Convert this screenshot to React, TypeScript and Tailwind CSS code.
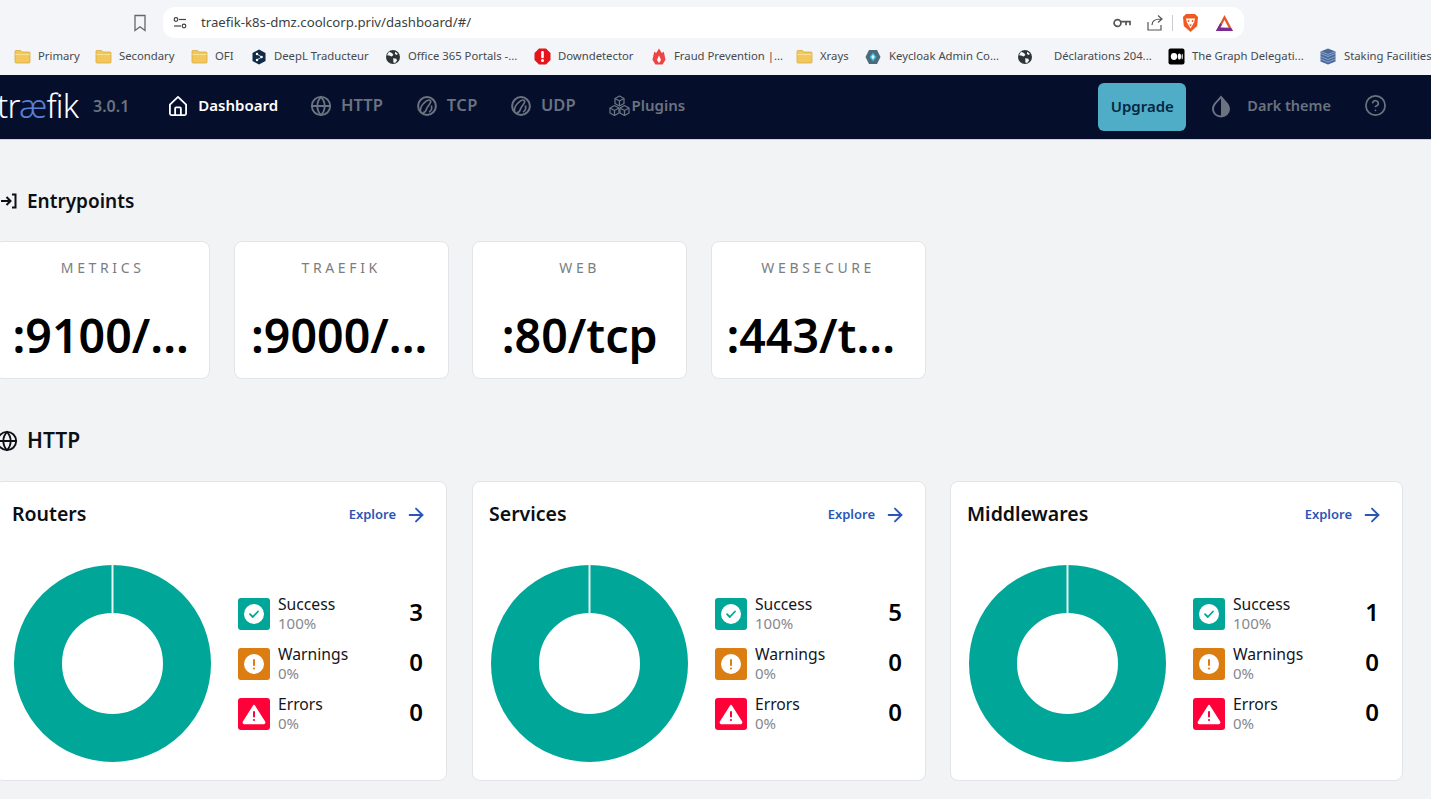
import { ArrowRight, Globe, CircleHelp } from "lucide-react";

const sans = "font-['Noto_Sans','Liberation_Sans',sans-serif]";

function Folder() {
  return (
    <svg width="17" height="15" viewBox="0 0 17 15" className="shrink-0">
      <path d="M1 2.500a1 1 0 0 1 1-1h4.500l1.500 1.500h7a1 1 0 0 1 1 1v9a1 1 0 0 1-1 1H2a1 1 0 0 1-1-1z" fill="#f2c75c" stroke="#d9a93f" strokeWidth="0.8" />
      <path d="M1.400 5h14.200v1H1.400z" fill="#fbe08f" />
    </svg>
  );
}
function EarthDark() {
  return (
    <svg width="16" height="16" viewBox="0 0 16 16" className="shrink-0">
      <circle cx="8" cy="8" r="7" fill="#2f3438" />
      <path d="M4 2.800 7 4 8.400 6 6.600 7.600 4.200 6.600 2 6.200zM8.200 9.200l3.200.6.6 2-2 2.200-1.600-.6zM10.400 2.800 13 5l-1.600 1-1.600-1.200z" fill="#f4f6f9" />
    </svg>
  );
}
function DeepL() {
  return (
    <svg width="15" height="16" viewBox="0 0 15 16" className="shrink-0">
      <path d="M7 0.500 13.500 4v8L7 15.500.5 12V4z" fill="#0f2b46" />
      <circle cx="5" cy="5" r="1.200" fill="#fff" />
      <circle cx="5" cy="11" r="1.200" fill="#fff" />
      <circle cx="9.600" cy="8" r="1.200" fill="#fff" />
      <path d="M5 5 9.600 8 5 11" stroke="#fff" strokeWidth="0.8" fill="none" />
    </svg>
  );
}
function Down() {
  return (
    <svg width="17" height="17" viewBox="0 0 17 17" className="shrink-0">
      <path d="M5 .5h7L16.500 5v7L12 16.500H5L.5 12V5z" fill="#e5141b" />
      <rect x="7.200" y="3" width="2.600" height="7.200" rx="1" fill="#fff" />
      <circle cx="8.500" cy="12.600" r="1.500" fill="#fff" />
    </svg>
  );
}
function Fraud() {
  return (
    <svg width="16" height="17" viewBox="-1 0 16 17" className="shrink-0">
      <path d="M7 .5 9.800 5l2-1.200 1.700 8L10.600 16.500H3.400L.5 11.800l1.700-8L4.200 5z" fill="#ef4444" />
      <path d="M7 7.500 9 12l-2 3-2-3z" fill="#fff" />
    </svg>
  );
}
function Keycloak() {
  return (
    <svg width="17" height="16" viewBox="0 0 17 16" className="shrink-0">
      <path d="M4 1h8l3.500 7L12 15H4L.5 8z" fill="#4d6a7a" />
      <path d="M8 3.500 11.500 8 8 12.500 4.500 8z" fill="#35b8dc" />
      <path d="M8 5.500 9.800 8 8 10.500 6.200 8z" fill="#d8f3fa" />
    </svg>
  );
}
function Medium() {
  return (
    <svg width="17" height="17" viewBox="0 0 17 17" className="shrink-0">
      <rect x="0.500" y="0.500" width="16" height="16" rx="2" fill="#000" />
      <ellipse cx="6" cy="8.500" rx="3.200" ry="3.400" fill="#fff" />
      <ellipse cx="11.400" cy="8.500" rx="1.600" ry="3.100" fill="#fff" />
      <ellipse cx="14.200" cy="8.500" rx="0.6" ry="2.800" fill="#fff" />
    </svg>
  );
}
function Staking() {
  return (
    <svg width="17" height="17" viewBox="0 0 17 17" className="shrink-0">
      <path d="M8 .5 15.500 3.500v10L8 16.500.5 13.500v-10z" fill="#4a6a9f" />
      <path d="M.5 5.500 8 8.500l7.500-3M.5 8.500l7.500 3 7.500-3M.5 11l7.500 3 7.500-3M.5 3.500l7.500 3 7.500-3" stroke="#b3c4de" strokeWidth="0.6" fill="none" />
    </svg>
  );
}

const bookmarks = [
  { icon: <Folder />, label: "Primary", cls: "w-[81px]" },
  { icon: <Folder />, label: "Secondary", cls: "w-[96px]" },
  { icon: <Folder />, label: "OFI", cls: "w-[61px]" },
  { icon: <DeepL />, label: "DeepL Traducteur", cls: "w-[133px]" },
  { icon: <EarthDark />, label: "Office 365 Portals -...", cls: "w-[149px]" },
  { icon: <Down />, label: "Downdetector", cls: "w-[117px]" },
  { icon: <Fraud />, label: "Fraud Prevention |...", cls: "w-[145px]" },
  { icon: <Folder />, label: "Xrays", cls: "w-[69px]" },
  { icon: <Keycloak />, label: "Keycloak Admin Co...", cls: "w-[152px]" },
  { icon: <EarthDark />, label: "", cls: "w-[37px]" },
  { icon: null, label: "Déclarations 204...", cls: "w-[114px]" },
  { icon: <Medium />, label: "The Graph Delegati...", cls: "w-[152px]" },
  { icon: <Staking />, label: "Staking Facilities", cls: "w-[111px]" },
];

function Tune() {
  return (
    <svg width="16" height="16" viewBox="0 0 16 16" fill="none" stroke="#444" strokeWidth="1.200">
      <circle cx="4" cy="4.500" r="1.800" />
      <path d="M7 4.500h7" />
      <circle cx="12" cy="11" r="1.800" />
      <path d="M2 11h7" />
    </svg>
  );
}

function Chrome() {
  return (
    <div className="bg-[#f3f5f8]">
      <div className="h-[38px] pt-[7px] flex items-center">
        <svg width="14" height="18" viewBox="0 0 14 18" fill="none" stroke="#666" strokeWidth="1.300" className="ml-[133px]">
          <path d="M2 1.500h10v15L7 12.800 2 16.500z" />
        </svg>
        <div className="ml-4 w-[1081px] h-[31px] bg-white rounded-xl flex items-center">
          <span className="ml-[9px]"><Tune /></span>
          <span className={`ml-[13px] text-[13.200px] text-[#3a3f44] ${sans}`}>traefik-k8s-dmz.coolcorp.priv/dashboard/#/</span>
          <div className="ml-auto flex items-center">
            <svg width="18" height="12" viewBox="0 0 18 12" fill="none" stroke="#555" strokeWidth="1.700">
              <circle cx="4.500" cy="6" r="3.400" />
              <path d="M8 4.700h9v3.600M13 4.700v3.600" />
            </svg>
            <svg width="18" height="18" viewBox="0 0 18 18" fill="none" stroke="#555" strokeWidth="1.200" className="ml-[15px]">
              <path d="M2 8v8h13v-5M6 11c0-4 3-6 9-6M12 1.500l4 3.500-4 3.500" />
            </svg>
            <div className="ml-[8px] w-px h-[16px] bg-[#c9ccd0]" />
            <svg width="17" height="20" viewBox="0 0 17 20" className="ml-[9px]">
              <path d="M4 1h9l3 3-.8 9L8.500 19 1.800 13 1 4z" fill="#f0591f" />
              <path d="M4 5.500h9l-1 4-3.500 6L5 9.500z" fill="#fff" />
              <circle cx="6.500" cy="8" r="0.900" fill="#f0591f" />
              <circle cx="10.500" cy="8" r="0.900" fill="#f0591f" />
              <path d="M7 11.500h3l-1.500 2z" fill="#f0591f" />
            </svg>
            <svg width="19" height="18" viewBox="0 0 19 18" className="ml-[16px] mr-[10px]">
              <path d="M9.500 1 18 17H1z" fill="#e05a2b" />
              <path d="M1 17 5.300 9 9.500 13 6 17z" fill="#7a2b8f" />
              <path d="M9.500 6 13.500 13.500H5.500z" fill="#fff" />
              <path d="M1 17h17l-2-3H3z" fill="#7a2b8f" />
            </svg>
          </div>
        </div>
      </div>
      <div className={`h-[37px] flex items-center pl-[14px] overflow-hidden whitespace-nowrap text-[11.300px] text-[#464a4e] ${sans}`}>
        {bookmarks.map((b, i) => (
          <div key={i} className={`${b.cls} shrink-0 flex items-center gap-[7px]`}>
            {b.icon}
            {b.label && <span>{b.label}</span>}
          </div>
        ))}
      </div>
    </div>
  );
}

function Wave() {
  return (
    <svg width="20" height="20" viewBox="0 0 20 20" fill="none" stroke="#6b7280" className="shrink-0">
      <circle cx="10" cy="10" r="8.900" strokeWidth="2" />
      <path d="M3.500 15.500C3 11 5 9 6.500 7.500S9.500 4 12 4c2 0 2 2 1 3.500S10 11 9.500 13s-1 3.500-3.500 3.500" strokeWidth="1.700" />
      <path d="M12 16c2.500-1 3-3.500 2.500-6.500" strokeWidth="1.700" />
    </svg>
  );
}

function Cubes() {
  return (
    <svg width="21" height="21" viewBox="0 0 21 21" fill="none" stroke="#6b7280" strokeWidth="1.300" strokeLinejoin="round" className="shrink-0">
      <path d="M10.500 1 15 3.500v5l-4.500 2.500L6 8.500v-5z" />
      <path d="M6 3.500 10.500 6 15 3.500M10.500 6v5" />
      <path d="M5.500 10.500 10 13v5l-4.500 2.500L1 18v-5z" />
      <path d="M1 13l4.500 2.500L10 13M5.500 15.500v5" />
      <path d="M15.500 10.500 20 13v5l-4.500 2.500L11 18v-5z" />
      <path d="M11 13l4.500 2.500L20 13M15.500 15.500v5" />
    </svg>
  );
}

function Nav() {
  return (
    <div className={`h-[65px] pb-[3px] bg-[#050f2c] flex items-center whitespace-nowrap font-semibold text-[15px] text-[#6b7280] ${sans} border-b border-[#c9d3e6]`}>
      <span className="ml-[-3px] w-[96px] text-[33px] font-light text-white tracking-tight leading-none">
        tr<span className="text-[#5a7fd6]">æ</span>fik
      </span>
      <span className="text-[16px]">3.0.1</span>
      <svg width="20" height="22" viewBox="0 0 21 22" fill="none" stroke="#fff" strokeWidth="1.900" strokeLinejoin="round" className="ml-[39px] shrink-0">
        <path d="M2 9.500 10.500 1.500 19 9.500V19a1.500 1.500 0 0 1-1.500 1.500h-14A1.500 1.500 0 0 1 2 19z" />
        <path d="M7.500 20.500V13.500a1 1 0 0 1 1-1h4a1 1 0 0 1 1 1v7" />
      </svg>
      <span className="ml-[10px] text-white">Dashboard</span>
      <Globe size={22} strokeWidth={2} className="ml-[32px] shrink-0" />
      <span className="ml-[9px] text-[16.500px]">HTTP</span>
      <span className="ml-[34px]"><Wave /></span>
      <span className="ml-[10px] text-[16.500px] tracking-[0.5px]">TCP</span>
      <span className="ml-[33px]"><Wave /></span>
      <span className="ml-[10px] text-[16.500px]">UDP</span>
      <span className="ml-[33px]"><Cubes /></span>
      <span className="ml-[2px]">Plugins</span>
      <div className="ml-auto flex items-center">
        <button className="mt-[3px] pb-[2px] w-[88px] h-[48px] rounded-md bg-[#4fadc7] text-[#06283f] font-semibold text-[15px]">Upgrade</button>
        <svg width="20" height="24" viewBox="0 0 20 24" className="ml-[25px]">
          <path d="M10 1.500C6 6.500 1 10 1 15a9 8.500 0 0 0 18 0C19 10 14 6.500 10 1.500z" fill="#6b7280" />
          <path d="M10 4.500C7 8 3 11 3 15c0 3.800 3.200 6.400 7 6.500z" fill="#050f2c" />
        </svg>
        <span className="ml-[16px] text-[14.500px]">Dark theme</span>
        <CircleHelp size={23} strokeWidth={1.800} className="ml-[33px] mr-[44px] shrink-0" />
      </div>
    </div>
  );
}

function EntryCard({ name, value, shift }: { name: string; value: string; shift: string }) {
  return (
    <div className="w-[215px] h-[138px] shrink-0 bg-white rounded-lg border border-[#e2e4e8] flex flex-col items-center pt-[17px]">
      <div className="text-[14px] tracking-[0.260em] text-[#7a7d82] leading-[18px]">{name}</div>
      <div className={`mt-[28px] text-[46.500px] font-semibold leading-[60px] text-black ${shift}`}>{value}</div>
    </div>
  );
}

function Check() {
  return (
    <svg width="22" height="22" viewBox="0 0 22 22">
      <circle cx="11" cy="11" r="10" fill="#fff" />
      <path d="M7 11.200 9.800 14 15 8.500" fill="none" stroke="#00a697" strokeWidth="1.800" strokeLinecap="round" strokeLinejoin="round" />
    </svg>
  );
}
function Warn() {
  return (
    <svg width="22" height="22" viewBox="0 0 22 22">
      <circle cx="11" cy="11" r="10" fill="#fff" />
      <rect x="10" y="6" width="2" height="7" rx="1" fill="#db7d11" />
      <circle cx="11" cy="15.500" r="1.100" fill="#db7d11" />
    </svg>
  );
}
function Err() {
  return (
    <svg width="24" height="22" viewBox="0 0 24 22">
      <path d="M12 2.500 22.500 19a1 1 0 0 1-.8 1.500H2.300A1 1 0 0 1 1.500 19z" fill="#fff" stroke="#fff" strokeWidth="1.500" strokeLinejoin="round" />
      <rect x="11" y="8" width="2" height="6.500" rx="1" fill="#ff0039" />
      <circle cx="12" cy="17" r="1.100" fill="#ff0039" />
    </svg>
  );
}

function Stat({ icon, bg, label, pct, n }: { icon: React.ReactNode; bg: string; label: string; pct: string; n: number }) {
  return (
    <div className="h-[32px] flex items-center">
      <div className={`w-[32px] h-[32px] rounded-[3px] flex items-center justify-center shrink-0 ${bg}`}>{icon}</div>
      <div className="ml-2 flex flex-col">
        <span className="text-[15.700px] leading-[19px] text-[#13161c]">{label}</span>
        <span className="text-[15px] leading-[18px] text-[#85888d]">{pct}</span>
      </div>
      <span className="ml-auto mr-[4px] mb-[4px] text-[24px] font-semibold text-black">{n}</span>
    </div>
  );
}

function Donut() {
  return (
    <svg width="197" height="197" viewBox="0 0 197 197" className="shrink-0">
      <circle cx="98.500" cy="98.500" r="74.500" fill="none" stroke="#00a697" strokeWidth="48" />
      <rect x="97.500" y="0" width="2" height="49" fill="#e6f6f4" />
    </svg>
  );
}

function StatCard({ title, n, cls }: { title: string; n: number; cls: string }) {
  return (
    <div className={`${cls} h-[300px] shrink-0 bg-white rounded-lg border border-[#e2e4e8] pl-[16px] pr-[19px]`}>
      <div className="h-[64px] flex items-center justify-between">
        <span className="text-[19.500px] font-semibold text-[#0c0f14]">{title}</span>
        <span className="mt-[1px] flex items-center gap-[9px] text-[13px] font-semibold text-[#2b56b5]">
          Explore <ArrowRight size={22} strokeWidth={2} />
        </span>
      </div>
      <div className="mt-[19px] flex items-center">
        <span className="ml-[2px]"><Donut /></span>
        <div className="ml-[27px] flex-1 flex flex-col gap-[18px]">
          <Stat icon={<Check />} bg="bg-[#00a697]" label="Success" pct="100%" n={n} />
          <Stat icon={<Warn />} bg="bg-[#db7d11]" label="Warnings" pct="0%" n={0} />
          <Stat icon={<Err />} bg="bg-[#ff0039]" label="Errors" pct="0%" n={0} />
        </div>
      </div>
    </div>
  );
}

export default function App() {
  return (
    <div className={`w-[1431px] h-[799px] overflow-hidden bg-[#f2f3f5] ${sans}`}>
      <Chrome />
      <Nav />
      <div className="ml-[-19px]">
        <div className="mt-[45px] h-[32px] flex items-center text-[19px] font-semibold text-[#0c0f14]">
          <svg width="22" height="16" viewBox="0 0 22 16" fill="none" stroke="#0c0f14" strokeWidth="2" className="shrink-0 ml-[14px]">
            <path d="M6 8h9M11.500 4l4 4-4 4M17 1.500h3.500v13H17" />
          </svg>
          <span className="ml-[10px]">Entrypoints</span>
        </div>
        <div className="mt-[24px] ml-[14.200px] flex gap-[23.500px]">
          <EntryCard name="METRICS" value=":9100/..." shift="mr-[4px]" />
          <EntryCard name="TRAEFIK" value=":9000/..." shift="mr-[4px]" />
          <EntryCard name="WEB" value=":80/tcp" shift="" />
          <EntryCard name="WEBSECURE" value=":443/t..." shift="mr-[15px]" />
        </div>
        <div className="mt-[46px] h-[32px] flex items-center text-[21px] font-semibold text-[#0c0f14]">
          <Globe size={22} strokeWidth={2} className="ml-[15px] shrink-0" color="#0c0f14" />
          <span className="ml-[9px]">HTTP</span>
        </div>
        <div className="mt-[24px] ml-[14px] flex gap-6">
          <StatCard title="Routers" n={3} cls="w-[452px] mr-[1px]" />
          <StatCard title="Services" n={5} cls="w-[454px]" />
          <StatCard title="Middlewares" n={1} cls="w-[453px]" />
        </div>
      </div>
    </div>
  );
}
